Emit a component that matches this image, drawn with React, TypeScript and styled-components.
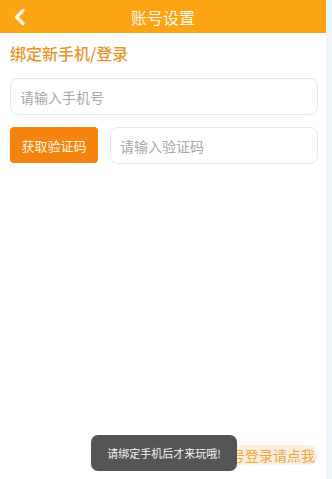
import React from 'react'
import styled, { createGlobalStyle } from 'styled-components'

const GlobalStyle = createGlobalStyle`
    html, body {
        margin: 0;
        padding: 0;
        background: #eef5f7;
        font-family: "Noto Sans CJK SC", "Noto Sans", sans-serif;
    }
    * {
        box-sizing: border-box;
    }
`

const Page = styled.div`
    position: relative;
    display: flex;
    flex-direction: column;
    width: 326px;
    height: 479px;
    background: #ffffff;
`

const Header = styled.header`
    position: relative;
    display: flex;
    align-items: center;
    justify-content: center;
    height: 33px;
    background: #fca414;
`

const BackButton = styled.button`
    position: absolute;
    left: 13px;
    top: 8px;
    display: flex;
    padding: 0;
    border: none;
    background: none;
`

const Title = styled.h1`
    margin: 0;
    font-size: 16px;
    font-weight: 400;
    color: #fff6e6;
`

const Body = styled.div`
    display: flex;
    flex-direction: column;
    padding: 10px 8px 0 10px;
`

const SectionTitle = styled.h2`
    margin: 0 0 15px;
    font-size: 16px;
    font-weight: 500;
    line-height: 20px;
    color: #e8952a;
`

const Row = styled.div`
    display: flex;
    gap: 12px;
    margin-bottom: 12px;
`

const Input = styled.input`
    flex: 1;
    min-width: 0;
    height: 37px;
    padding: 0 9px;
    border: 1px solid #dfeaea;
    border-radius: 8px;
    font-family: inherit;
    font-size: 14px;
    color: #333;
    outline: none;

    &::placeholder {
        color: #a8a8a8;
    }
`

const CodeButton = styled.button`
    flex: 0 0 88px;
    height: 36px;
    border: none;
    border-radius: 4px;
    background: #f5830f;
    font-family: inherit;
    font-size: 13px;
    color: #fff3e0;
`

const Footer = styled.div`
    display: flex;
    justify-content: flex-end;
    margin-top: auto;
    padding: 0 8px 14px 0;
`

const LoginLink = styled.span`
    padding: 0 3px;
    border-radius: 10px;
    background: #fdefe0;
    font-size: 14px;
    line-height: 20px;
    color: #f2a640;
`

const Toast = styled.div`
    position: absolute;
    left: 91px;
    top: 435px;
    display: flex;
    align-items: center;
    justify-content: center;
    width: 146px;
    height: 36px;
    border-radius: 7px;
    background: #555555;
    font-size: 11px;
    color: #f4f4f4;
`

function BackIcon() {
    return (
        <svg width="14" height="18" viewBox="0 0 14 18">
            <path d="M10 2.5 L3.5 9 L10 15.5" fill="none" stroke="#fff8e8" strokeWidth="3.2" strokeLinecap="round" strokeLinejoin="round" />
        </svg>
    )
}

export default function App() {
    return (
        <>
            <GlobalStyle />
            <Page>
                <Header>
                    <BackButton>
                        <BackIcon />
                    </BackButton>
                    <Title>账号设置</Title>
                </Header>
                <Body>
                    <SectionTitle>绑定新手机/登录</SectionTitle>
                    <Row>
                        <Input placeholder="请输入手机号" />
                    </Row>
                    <Row>
                        <CodeButton>获取验证码</CodeButton>
                        <Input placeholder="请输入验证码" />
                    </Row>
                </Body>
                <Footer>
                    <LoginLink>已有账号登录请点我</LoginLink>
                </Footer>
                <Toast>请绑定手机后才来玩哦!</Toast>
            </Page>
        </>
    )
}
